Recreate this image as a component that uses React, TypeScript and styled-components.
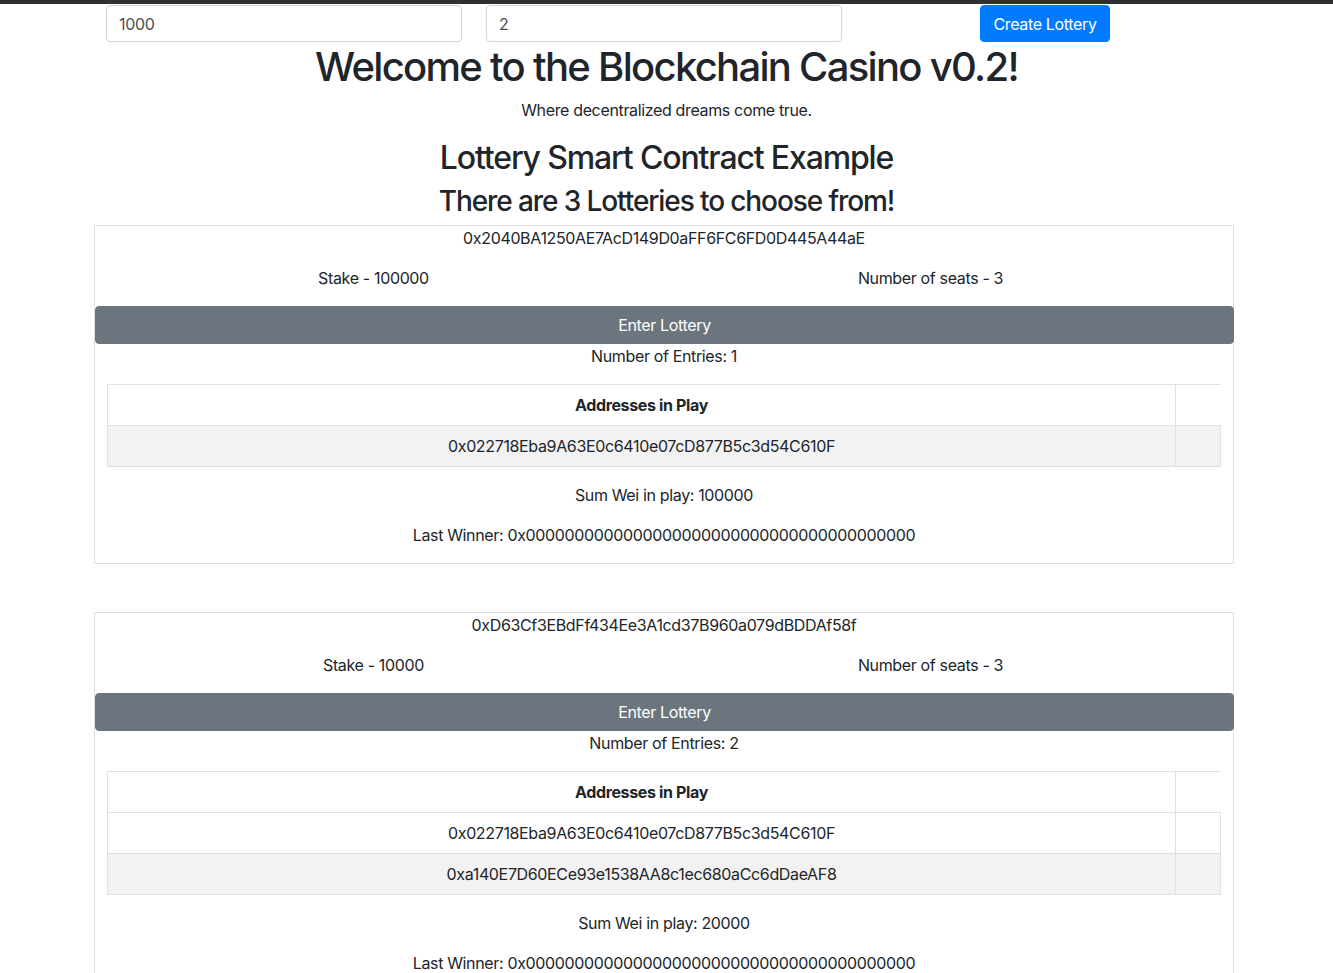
import React from "react";
import styled, { createGlobalStyle } from "styled-components";

const GlobalStyle = createGlobalStyle`
  html, body { margin: 0; padding: 0; background: #fff; }
  body {
    font-family: Inter, "Noto Sans", "Liberation Sans", sans-serif;
    font-size: 16px;
    line-height: 24px;
    letter-spacing: -0.35px;
    color: #212529;
  }
  * { box-sizing: border-box; }
`;

const TopStrip = styled.div`
  height: 4px;
  background: #2f3032;
`;

const FormRow = styled.div`
  display: flex;
  align-items: center;
  gap: 24px;
  padding-left: 106px;
  margin-top: 1px;
  height: 37px;
`;

const Input = styled.input`
  width: 356px;
  height: 37px;
  padding: 6px 12px;
  font: inherit;
  font-size: 16px;
  letter-spacing: inherit;
  color: #495057;
  border: 1px solid #ced4da;
  border-radius: 4px;
  background: #fff;
  outline: none;
`;

const PrimaryButton = styled.button`
  margin-left: 114px;
  height: 37px;
  width: 130px;
  padding: 6px 0;
  font: inherit;
  font-size: 16px;
  letter-spacing: inherit;
  white-space: nowrap;
  color: #fff;
  background: #007bff;
  border: 1px solid #007bff;
  border-radius: 4px;
`;

const Title = styled.h1`
  margin: 1px 0 0;
  font-size: 40px;
  line-height: 48px;
  font-weight: 500;
  letter-spacing: -1.7px;
  text-align: center;
`;

const Lead = styled.p`
  margin: 7px 0 0;
  text-align: center;
`;

const SubTitle = styled.h2`
  margin: 17px 0 0;
  font-size: 32px;
  line-height: 38px;
  font-weight: 500;
  letter-spacing: -1.15px;
  text-align: center;
`;

const Count = styled.h3`
  margin: 7px 0 0;
  font-size: 28px;
  line-height: 34px;
  font-weight: 500;
  letter-spacing: -1.1px;
  text-align: center;
`;

const Card = styled.section<{ $first?: boolean }>`
  margin: ${(p) => (p.$first ? "7px" : "48px")} 0 0 94px;
  width: 1140px;
  border: 1px solid #dfdfdf;
  text-align: center;
`;

const Line = styled.p`
  margin: 0 0 16px;
`;

const InfoRow = styled.div`
  display: grid;
  grid-template-columns: 557px 557px;
  margin-bottom: 16px;
`;

const SecondaryButton = styled.button`
  display: block;
  width: 1139px;
  height: 38px;
  padding: 6px 12px;
  font: inherit;
  font-size: 16px;
  letter-spacing: inherit;
  color: #fff;
  background: #6c757d;
  border: 1px solid #6c757d;
  border-radius: 4px;
`;

const Table = styled.table`
  margin: 16px 12px 16px;
  width: 1114px;
  border-collapse: collapse;
`;

const HeadCell = styled.th<{ $open?: boolean }>`
  height: 41px;
  padding: 8px;
  font-weight: 700;
  border-top: 1px solid #dee2e6;
  border-left: 1px solid #dee2e6;
  border-bottom: 1px solid #dee2e6;
  border-right: ${(p) => (p.$open ? "none" : "1px solid #dee2e6")};
`;

const Row = styled.tr<{ $striped?: boolean }>`
  background: ${(p) => (p.$striped ? "#f2f2f2" : "#fff")};
`;

const Cell = styled.td`
  height: 41px;
  padding: 8px;
  border: 1px solid #dee2e6;
`;

type Lottery = {
  address: string;
  stake: string;
  seats: number;
  players: string[];
  sum: string;
};

const lotteries: Lottery[] = [
  {
    address: "0x2040BA1250AE7AcD149D0aFF6FC6FD0D445A44aE",
    stake: "100000",
    seats: 3,
    players: ["0x022718Eba9A63E0c6410e07cD877B5c3d54C610F"],
    sum: "100000",
  },
  {
    address: "0xD63Cf3EBdFf434Ee3A1cd37B960a079dBDDAf58f",
    stake: "10000",
    seats: 3,
    players: [
      "0x022718Eba9A63E0c6410e07cD877B5c3d54C610F",
      "0xa140E7D60ECe93e1538AA8c1ec680aCc6dDaeAF8",
    ],
    sum: "20000",
  },
];

const LotteryCard: React.FC<{ lottery: Lottery; first?: boolean }> = ({ lottery, first }) => (
  <Card $first={first}>
    <Line>{lottery.address}</Line>
    <InfoRow>
      <span>Stake - {lottery.stake}</span>
      <span>Number of seats - {lottery.seats}</span>
    </InfoRow>
    <SecondaryButton>Enter Lottery</SecondaryButton>
    <Line>Number of Entries: {lottery.players.length}</Line>
    <Table>
      <colgroup>
        <col style={{ width: 1069 }} />
        <col style={{ width: 45 }} />
      </colgroup>
      <thead>
        <tr>
          <HeadCell>Addresses in Play</HeadCell>
          <HeadCell $open />
        </tr>
      </thead>
      <tbody>
        {lottery.players.map((addr, i) => (
          <Row key={addr} $striped={i === lottery.players.length - 1}>
            <Cell>{addr}</Cell>
            <Cell />
          </Row>
        ))}
      </tbody>
    </Table>
    <Line>Sum Wei in play: {lottery.sum}</Line>
    <Line>Last Winner: 0x0000000000000000000000000000000000000000</Line>
  </Card>
);

export default function App() {
  return (
    <>
      <GlobalStyle />
      <TopStrip />
      <FormRow>
        <Input defaultValue="1000" />
        <Input defaultValue="2" />
        <PrimaryButton>Create Lottery</PrimaryButton>
      </FormRow>
      <Title>Welcome to the Blockchain Casino v0.2!</Title>
      <Lead>Where decentralized dreams come true.</Lead>
      <SubTitle>Lottery Smart Contract Example</SubTitle>
      <Count>There are 3 Lotteries to choose from!</Count>
      {lotteries.map((l, i) => (
        <LotteryCard key={l.address} lottery={l} first={i === 0} />
      ))}
    </>
  );
}
